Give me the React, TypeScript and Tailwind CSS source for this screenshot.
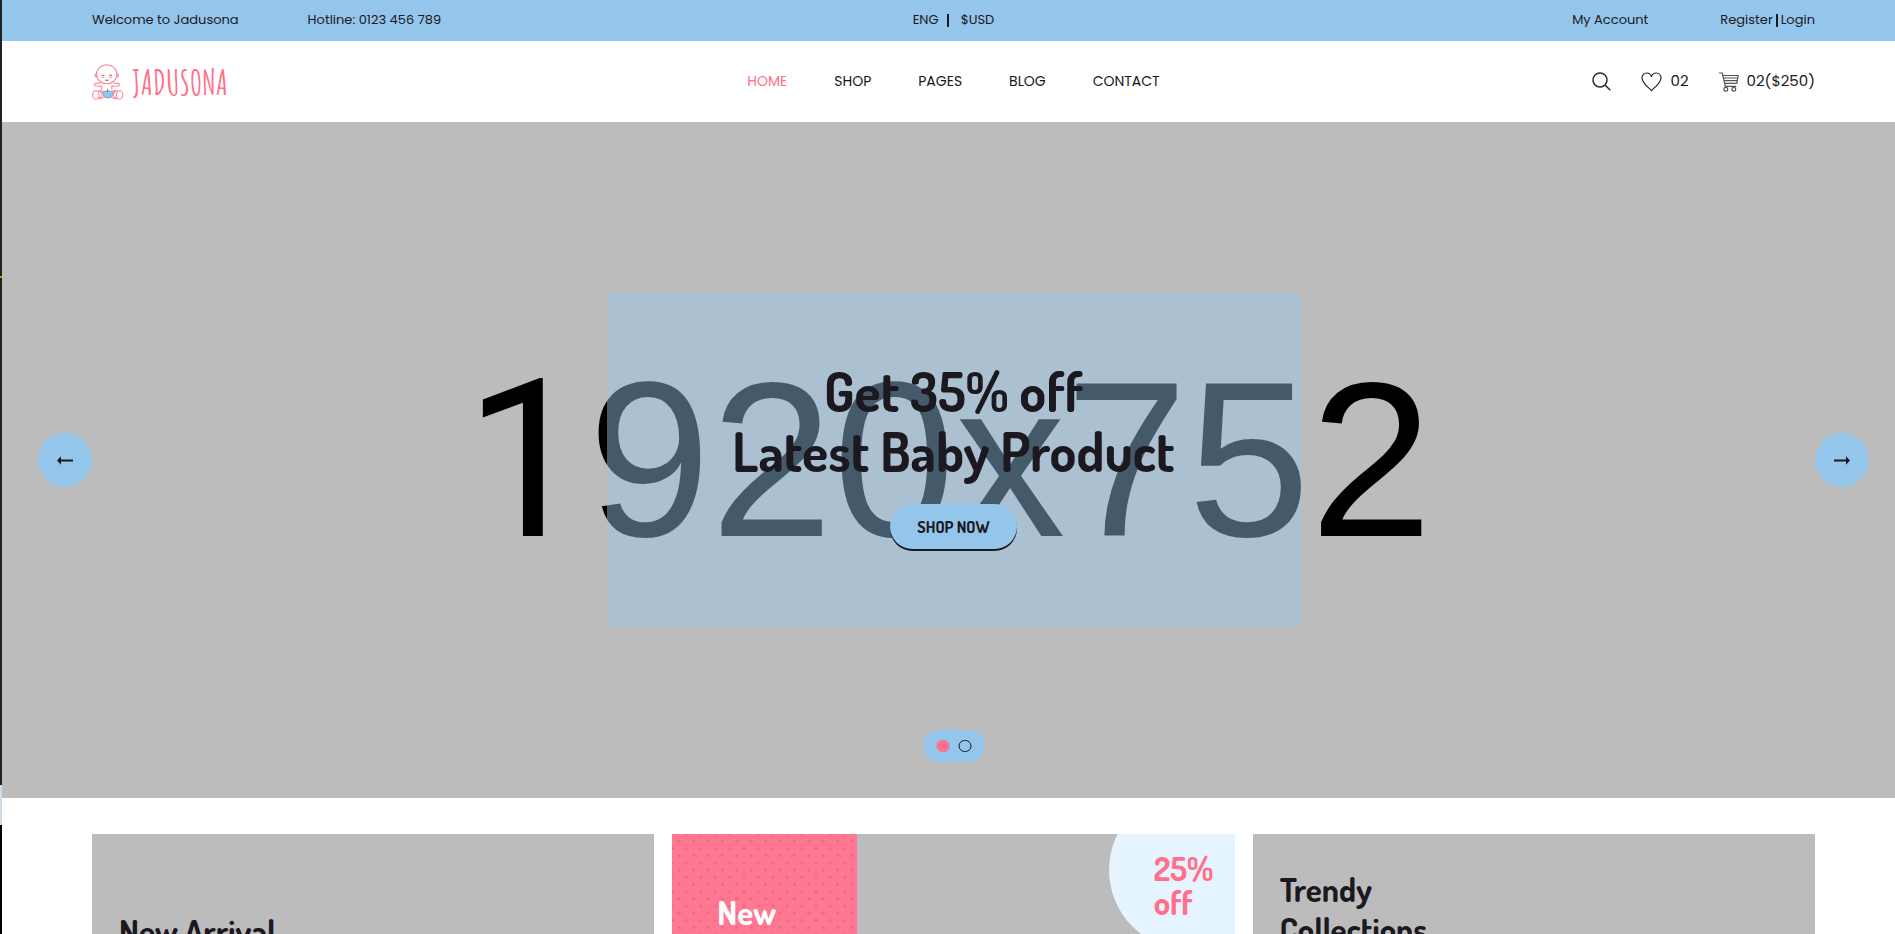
import React, { useState } from 'react';
import { clsx } from 'clsx';

const navLinks = ['HOME', 'SHOP', 'PAGES', 'BLOG', 'CONTACT'];

const displayFont = "font-['Dosis','Lato',sans-serif]";

const LogoIcon = () => (
    <svg width="32" height="36" viewBox="0 0 32 36" fill="none" stroke="#ff8197" strokeWidth="1.1" strokeLinecap="round" strokeLinejoin="round">
        <circle cx="4.4" cy="11.4" r="1.5" />
        <circle cx="25" cy="11.4" r="1.5" />
        <ellipse cx="14.7" cy="10.3" rx="10.2" ry="9.5" fill="#fff" />
        <path d="M10 11.2h2M17.6 11.2h2" stroke="#b0586b" />
        <path d="M10 13.2h2M17.6 13.2h2" />
        <path d="M13.8 16c.6.6 1.4.6 2 0" stroke="#b0586b" />
        <path d="M8 18.8c-1.8.8-3.9.5-5 .7-1.2.4-1.1 1.9 0 2.3 1.600.5 4.600.5 6.800.2v3.200M21.6 18.8c1.800.8 3.900.5 5 .7 1.200.4 1.100 1.900 0 2.300-1.600.5-4.600.5-6.800.2v3.200" />
        <path d="M10.800 27.400h10c0 3-1 5.200-2.400 6.200h-5.200c-1.400-1-2.400-3.200-2.400-6.200z" fill="#94c5eb" stroke="#94a9d2" />
        <path d="M15.6 25.6v2" stroke="#b0586b" />
        <path d="M5.6 27.2l4.2-1M25.8 27.2l-4.2-1M6.6 34.4c2 .2 3.7-.1 4.8-1M24.8 34.4c-2 .2-3.7-.1-4.8-1" />
        <ellipse cx="3.9" cy="31" rx="3.2" ry="4.2" fill="#fff" />
        <ellipse cx="27.6" cy="31" rx="3.2" ry="4.2" fill="#fff" />
        <path d="M7.600 27.400c1.800.4 2.600 1.800 2.600 3.200s-.8 2.600-2.400 3.200M23.800 27.400c-1.800.4-2.600 1.800-2.600 3.200s.8 2.600 2.400 3.200" />
    </svg>
);

const SearchIcon = () => (
    <svg width="19" height="19" viewBox="0 0 19 19" fill="none" stroke="#2a272e" strokeWidth="1.5">
        <circle cx="8" cy="8" r="7" />
        <path d="M13 13l5.3 5.3" />
    </svg>
);

const HeartIcon = () => (
    <svg width="21" height="20" viewBox="0 0 21 20" fill="none" stroke="#2a272e" strokeWidth="1.2" strokeLinejoin="round">
        <path d="M10.5 18.7C7.5 15.4 1 10.8 1 5.9 1 3 3.1 1 5.7 1c2.2 0 4 1.3 4.800 3.600C11.300 2.300 13.100 1 15.300 1 17.900 1 20 3 20 5.900c0 4.900-6.500 9.500-9.500 12.800z" />
    </svg>
);

const CartIcon = () => (
    <svg width="20" height="20" viewBox="0 0 20 20" fill="none" stroke="#55525a" strokeWidth="1.2">
        <path d="M0 1h3.2l3.2 13.4h10.8" />
        <path d="M4 3.5h15.2l-1.4 7.8H5.8M4.6 6h14M5.2 8.6h13" />
        <circle cx="6.8" cy="17.2" r="1.9" />
        <circle cx="14.8" cy="17.2" r="1.9" />
    </svg>
);

const Arrow = ({ flip }: { flip?: boolean }) => (
    <svg width="16" height="9" viewBox="0 0 16 9" className={clsx(flip && 'rotate-180')}>
        <path d="M0 4.5L4 .2v3.200h12v2H4v3.400z" fill="#1c1820" />
    </svg>
);

const TopBar = () => (
    <div className="grid grid-cols-[1fr_auto_1fr] items-center h-[41px] pb-px px-[90px] bg-[#94c5eb] text-[13px]">
        <div className="flex gap-[69px]">
            <p>Welcome to Jadusona</p>
            <p>Hotline: 0123 456 789</p>
        </div>
        <div className="flex items-center">
            <a href="#eng">ENG</a>
            <span className="w-[2px] h-[13px] ml-2 mr-3 bg-[#1c1820]"></span>
            <a href="#usd">$USD</a>
        </div>
        <div className="flex items-center justify-end">
            <a href="#account" className="mr-[72px]">My Account</a>
            <a href="#register">Register</a>
            <span className="w-[2px] h-[13px] mx-[3px] bg-[#1c1820]"></span>
            <a href="#login">Login</a>
        </div>
    </div>
);

const Header = () => (
    <header className="grid grid-cols-[1fr_auto_1fr] items-center h-[81px] px-[90px] bg-white">
        <a href="#home" className="flex items-center gap-2">
            <LogoIcon />
            <span className="font-['Amatic_SC','Dosis','Lato',sans-serif] text-[34px] leading-9 font-bold text-[#ff708a]">JADUSONA</span>
        </a>
        <nav className="flex gap-[47px] pb-0.5 text-sm">
            {navLinks.map(link => (
                <a key={link} href={`#${link.toLowerCase()}`} className={clsx(link === 'HOME' && 'text-[#ff708a]')}>{link}</a>
            ))}
        </nav>
        <div className="flex items-center justify-end text-[15px]">
            <button aria-label="Search" className="mr-[30px]"><SearchIcon /></button>
            <a href="#wishlist" className="flex items-center gap-2 mr-[30px]"><HeartIcon /> 02</a>
            <a href="#cart" className="flex items-center gap-2"><CartIcon /> 02($250)</a>
        </div>
    </header>
);

const Hero = () => {
    const [slide, setSlide] = useState(0);
    const toggle = () => setSlide(slide === 0 ? 1 : 0);

    return (
        <section className="relative flex items-center justify-center h-[676px] bg-[#bcbcbc]">
            {/* Placeholder slide artwork */}
            <div className="absolute inset-0 flex items-center justify-center pr-2.5 text-[220px] leading-none text-black font-['Liberation_Sans',sans-serif]">
                <span><span className="font-['Roboto']">1</span>920x752</span>
            </div>

            <div className={clsx(displayFont, 'relative w-[694px] h-[334px] flex flex-col items-center justify-center pb-[11px] bg-[#96c6ec]/45')}>
                <h1 className="text-center text-[54px] leading-[60px] font-bold">
                    Get 35% off<br />Latest Baby Product
                </h1>
                <button className="mt-[23px] w-[127px] h-[45px] pt-0.5 rounded-3xl bg-[#94c5eb] text-base font-bold shadow-[0_2px_0_#1c1820]">
                    SHOP NOW
                </button>
            </div>

            <button onClick={toggle} aria-label="Previous" className="absolute left-9 top-[311px] size-[54px] rounded-full bg-[#94c5eb] flex items-center justify-center">
                <Arrow />
            </button>
            <button onClick={toggle} aria-label="Next" className="absolute right-9 top-[311px] size-[54px] rounded-full bg-[#94c5eb] flex items-center justify-center">
                <Arrow flip />
            </button>

            <div className="absolute bottom-9 left-1/2 -translate-x-1/2 h-8 px-[13px] flex items-center gap-[9px] rounded-full bg-[#94c5eb]">
                {[0, 1].map(i => (
                    <button
                        key={i}
                        onClick={() => setSlide(i)}
                        aria-label={`Slide ${i + 1}`}
                        className={clsx('w-[13px] h-3 rounded-full border', slide === i ? 'bg-[#ff708a] border-[#ff708a]' : 'border-[#1c1820]')}
                    />
                ))}
            </div>
        </section>
    );
};

const Banners = () => (
    <section className={clsx(displayFont, 'grid grid-cols-3 gap-[18px] px-[90px] pt-9 text-[33px] leading-10 font-bold')}>
        <a href="#new" className="h-[300px] px-[27px] pt-[77px] bg-[#bcbcbc]">
            <h2>New Arrival</h2>
        </a>

        <a href="#sale" className="relative h-[300px] overflow-hidden bg-[#bcbcbc]">
            <div className="relative w-[185px] h-full px-[45px] pt-[58px] bg-[#ff7790] text-white">
                <svg className="absolute inset-0 w-full h-full">
                    <pattern id="dots" width="14.4" height="14.4" patternUnits="userSpaceOnUse">
                        <g fill="#ec6684">
                            <circle cx="7.2" cy="7.2" r="1.5" />
                            <circle cx="0" cy="0" r="1.5" />
                            <circle cx="14.4" cy="0" r="1.5" />
                            <circle cx="0" cy="14.4" r="1.5" />
                            <circle cx="14.4" cy="14.4" r="1.5" />
                        </g>
                    </pattern>
                    <rect width="100%" height="100%" fill="url(#dots)" />
                </svg>
                <h2 className="relative">New</h2>
            </div>
            <div className="absolute -top-11 -right-[34px] size-40 rounded-full pl-[45px] pt-[61px] bg-[#e6f4ff] text-[#ff708a] leading-[34px]">
                25%<br />off
            </div>
        </a>

        <a href="#trendy" className="h-[300px] px-[27px] pt-[35px] bg-[#bcbcbc]">
            <h2>Trendy<br />Collections</h2>
        </a>
    </section>
);

export default function App() {
    return (
        <div className="flex h-screen overflow-hidden bg-white text-[#1c1820] font-['Poppins','Inter',sans-serif]">
            {/* Window edge */}
            <div className="w-[2px] shrink-0 flex flex-col bg-black">
                <div className="h-[276px] bg-[#202020]"></div>
                <div className="h-[2px] bg-[#c79a00]"></div>
                <div className="h-[507px] bg-[#202020]"></div>
                <div className="h-10 bg-[#cfdde8]"></div>
            </div>
            <div className="flex-1 min-w-0 -mr-[10px]">
                <TopBar />
                <Header />
                <Hero />
                <Banners />
            </div>
        </div>
    );
}
